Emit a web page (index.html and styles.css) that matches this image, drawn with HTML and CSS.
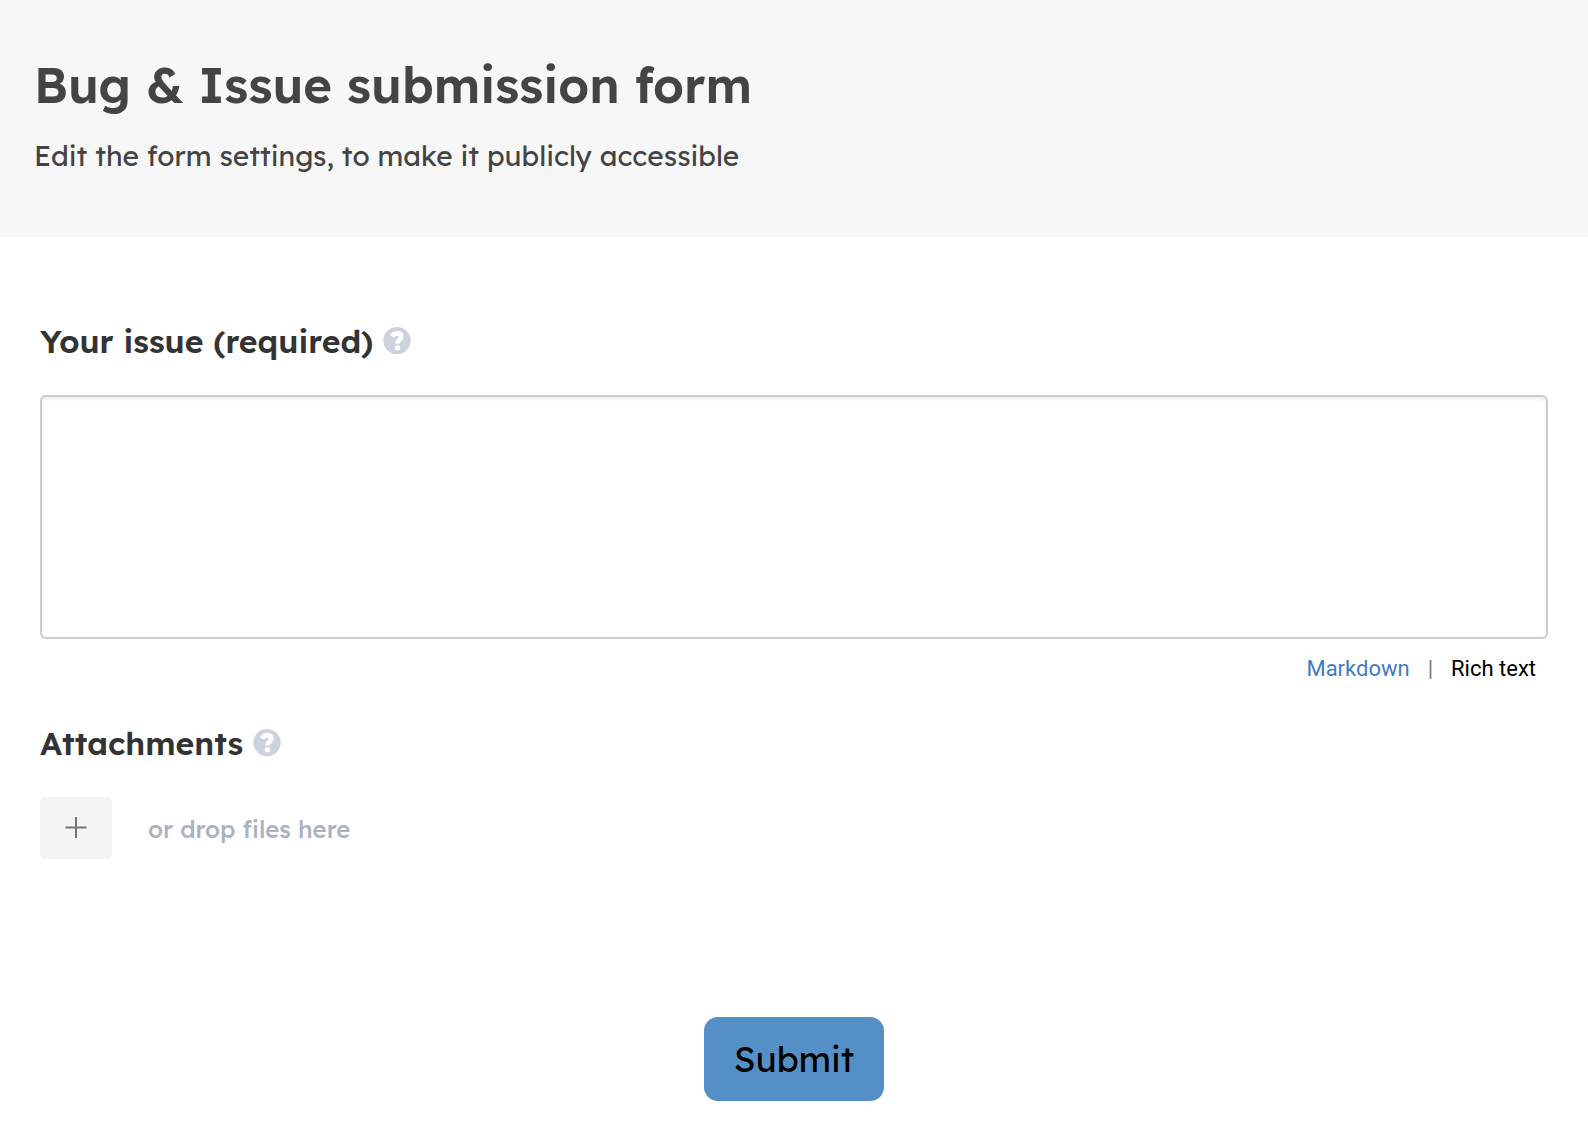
FILE: index.html
```html
<!DOCTYPE html>
<html lang="en">
<head>
  <meta charset="utf-8">
  <meta name="viewport" content="width=device-width, initial-scale=1">
  <title>Bug &amp; Issue submission form</title>
  <link rel="stylesheet" href="styles.css">
</head>
<body>
  <header class="page-header">
    <h1 class="title">Bug &amp; Issue submission form</h1>
    <p class="subtitle">Edit the form settings, to make it publicly accessible</p>
  </header>
  <main>
    <form class="form">
      <div class="field">
        <div class="field-head">
          <label class="label" for="issue">Your issue (required)</label>
          <svg class="help" viewBox="0 0 28 28" aria-hidden="true">
            <circle class="help-disc" cx="14" cy="13.6" r="13.7"/>
            <path class="help-hook" d="M9 9.6C10.2 7.4 11.8 6.4 14.2 6.4C17 6.4 18.4 7.8 18.4 9.8C18.4 12.8 14.4 12.4 14.4 16.4"/>
            <rect class="help-dot" x="11.9" y="18.4" width="5" height="4.8" rx="1"/>
          </svg>
        </div>
        <textarea class="editor" id="issue" required></textarea>
        <div class="modes">
          <a class="mode-link" href="#markdown">Markdown</a>
          <span class="divider">|</span>
          <span>Rich text</span>
        </div>
      </div>
      <div class="field">
        <div class="field-head">
          <span class="label" id="attachments">Attachments</span>
          <svg class="help" viewBox="0 0 28 28" aria-hidden="true">
            <circle class="help-disc" cx="14" cy="13.6" r="13.7"/>
            <path class="help-hook" d="M9 9.6C10.2 7.4 11.8 6.4 14.2 6.4C17 6.4 18.4 7.8 18.4 9.8C18.4 12.8 14.4 12.4 14.4 16.4"/>
            <rect class="help-dot" x="11.9" y="18.4" width="5" height="4.8" rx="1"/>
          </svg>
        </div>
        <div class="upload">
          <button class="add" type="button" aria-labelledby="attachments">
            <svg class="plus" viewBox="0 0 22 22" aria-hidden="true"><path d="M11 0V21M0.5 10.5H21.5"/></svg>
          </button>
          <span class="hint">or drop files here</span>
        </div>
      </div>
      <button class="submit" type="submit">Submit</button>
    </form>
  </main>
</body>
</html>
```
FILE: styles.css
```css
* {
  box-sizing: border-box;
}

body {
  margin: 0;
  background: #fff;
  color: #333;
  font-family: Lexend, Inter, sans-serif;
}

.page-header {
  padding: 55px 34px 61px;
  background: #f7f7f7;
  color: #444;
}

.title {
  margin: 0;
  font-size: 49px;
  font-weight: 600;
  line-height: 60px;
}

.subtitle {
  margin: 20px 0 0;
  font-size: 28px;
  font-weight: 400;
  line-height: 41px;
}

.form {
  display: flex;
  flex-direction: column;
  padding: 84px 40px 35px;
}

.field-head {
  display: flex;
  align-items: center;
  gap: 10px;
  height: 40px;
}

.label {
  font-size: 32px;
  font-weight: 600;
  line-height: 40px;
}

.help {
  width: 28px;
  height: 28px;
  overflow: visible;
}

.help-disc {
  fill: #ced2dd;
}

.help-hook {
  fill: none;
  stroke: #fff;
  stroke-width: 4.6;
}

.help-dot {
  fill: #fff;
}

.editor {
  display: block;
  width: 100%;
  height: 244px;
  margin-top: 34px;
  padding: 12px;
  border: 2px solid #ccc;
  border-radius: 6px;
  box-shadow: inset 0 2px 4px rgba(0, 0, 0, 0.07);
  font: inherit;
  font-size: 24px;
  resize: none;
  outline: none;
}

.modes {
  display: flex;
  justify-content: flex-end;
  gap: 18px;
  padding: 15px 12px 0;
  margin-bottom: 39px;
  color: #000;
  font-family: Roboto, sans-serif;
  font-size: 22px;
  line-height: 30px;
}

.mode-link {
  color: #3f7bc2;
  text-decoration: none;
}

.divider {
  color: #777;
}

.upload {
  display: flex;
  align-items: center;
  gap: 36px;
  margin-top: 34px;
}

.add {
  display: flex;
  align-items: center;
  justify-content: center;
  width: 72px;
  height: 62px;
  padding: 0;
  border: 0;
  border-radius: 6px;
  background: #f4f4f4;
}

.plus {
  width: 22px;
  height: 22px;
  fill: none;
  stroke: #777;
  stroke-width: 2;
}

.hint {
  padding-top: 2px;
  color: #adb2bf;
  font-size: 24px;
  font-weight: 500;
  line-height: 32px;
}

.submit {
  align-self: center;
  margin-top: 158px;
  padding: 20px 30px;
  border: 0;
  border-radius: 14px;
  background: #5490c6;
  color: #000;
  font: inherit;
  font-size: 35px;
  line-height: 44px;
}
```
